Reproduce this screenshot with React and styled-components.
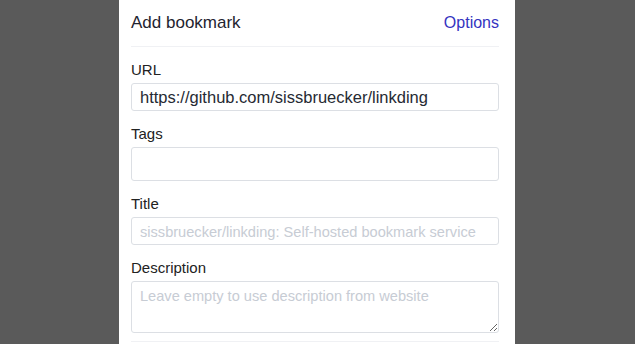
import React from "react";
import styled, { createGlobalStyle } from "styled-components";

const GlobalStyle = createGlobalStyle`
  html, body {
    margin: 0;
    padding: 0;
    height: 100%;
    background: #5a5a5a;
    overflow: hidden;
  }
  body {
    font-family: "Liberation Sans", Arial, sans-serif;
    color: #222;
  }
  #root {
    height: 100%;
  }
`;

const Page = styled.div`
  height: 100%;
  padding-left: 119px;
`;

const Panel = styled.div`
  width: 396px;
  height: 100%;
  box-sizing: border-box;
  background: #fff;
  padding: 0 16px 0 12px;
`;

const Header = styled.div`
  height: 46px;
  display: flex;
  align-items: center;
  justify-content: space-between;
  border-bottom: 1px solid #f0f1f4;
`;

const Heading = styled.h2`
  margin: 0;
  font-size: 17px;
  font-weight: 500;
  color: #1f2430;
`;

const OptionsLink = styled.a`
  font-size: 16px;
  color: #3434bf;
  text-decoration: none;
  cursor: pointer;
`;

const Form = styled.form`
  padding-top: 13px;
  border-bottom: 1px solid #f0f1f4;
  padding-bottom: 8px;
`;

const Group = styled.div`
  display: flex;
  flex-direction: column;
  margin-bottom: ${({ $last }) => ($last ? "0" : "13px")};
`;

const Label = styled.label`
  font-size: 15px;
  line-height: 20px;
  margin-bottom: 3px;
  color: #222;
`;

const fieldCss = `
  box-sizing: border-box;
  width: 100%;
  border: 1px solid #dcdfe4;
  border-radius: 3px;
  padding: 0 8px;
  font-family: "Liberation Sans", Arial, sans-serif;
  font-size: 16.5px;
  color: #262a33;
  background: #fff;
  outline: none;
  &::placeholder {
    color: #c7ccd4;
    font-size: 14.6px;
  }
`;

const Input = styled.input`
  ${fieldCss}
  height: ${({ $tall }) => ($tall ? "34px" : "28px")};
`;

const TextArea = styled.textarea`
  ${fieldCss}
  display: block;
  height: 52px;
  padding-top: 6px;
  resize: vertical;
`;

export default function App() {
  return (
    <>
      <GlobalStyle />
      <Page>
        <Panel>
          <Header>
            <Heading>Add bookmark</Heading>
            <OptionsLink>Options</OptionsLink>
          </Header>
          <Form>
            <Group>
              <Label>URL</Label>
              <Input defaultValue="https://github.com/sissbruecker/linkding" />
            </Group>
            <Group>
              <Label>Tags</Label>
              <Input $tall />
            </Group>
            <Group>
              <Label>Title</Label>
              <Input placeholder="sissbruecker/linkding: Self-hosted bookmark service" />
            </Group>
            <Group $last>
              <Label>Description</Label>
              <TextArea placeholder="Leave empty to use description from website" />
            </Group>
          </Form>
        </Panel>
      </Page>
    </>
  );
}
